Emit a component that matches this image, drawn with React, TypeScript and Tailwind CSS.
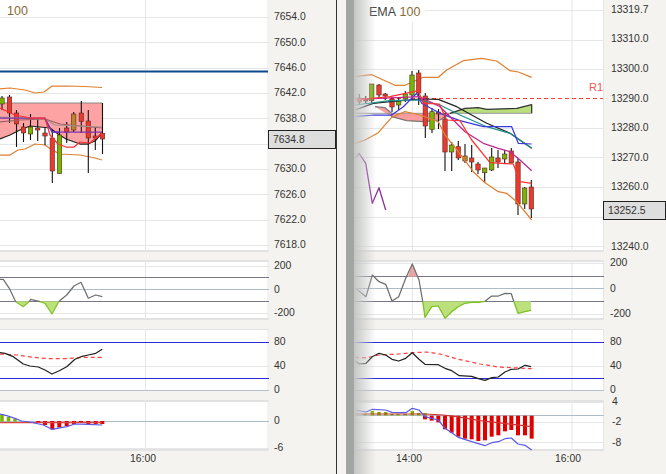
import type { ReactNode } from 'react';

// traced from 3x crops: x/3 + ox, y/3 + oy
const z = (a: number[], ox: number, oy: number) =>
  a.map((v, i) => (i % 2 === 0 ? v / 3 + ox : v / 3 + oy));
const str = (a: number[]) => a.reduce((s, v, i) => s + (i % 2 === 0 ? ' ' + v.toFixed(1) : ',' + v.toFixed(1)), '').trim();

const RED = '#e93a30';
const GREEN = '#76b500';
const OCHRE = '#b8862a';

function Line({ p, c, w = 1.25, dash }: { p: number[]; c: string; w?: number; dash?: string }) {
  return <polyline points={str(p)} fill="none" stroke={c} strokeWidth={w} strokeDasharray={dash} strokeLinejoin="round" />;
}

function Area({ p, c, s }: { p: number[]; c: string; s?: string }) {
  return <polygon points={str(p)} fill={c} stroke={s ?? 'none'} strokeWidth={s ? 1 : 0} />;
}

function HLines({ x0, w, ys, c = '#e6e6e6', sw = 1 }: { x0: number; w: number; ys: number[]; c?: string; sw?: number }) {
  return (
    <>
      {ys.map((y) => (
        <line key={y} x1={x0} x2={x0 + w} y1={y} y2={y} stroke={c} strokeWidth={sw} />
      ))}
    </>
  );
}

function VLines({ xs, y0, y1 }: { xs: number[]; y0: number; y1: number }) {
  return (
    <>
      {xs.map((x) => (
        <line key={x} x1={x} x2={x} y1={y0} y2={y1} stroke="#e6e6e6" strokeWidth={1} />
      ))}
    </>
  );
}

// x, bodyTop, bodyBottom, wickTop, wickBottom, colour
type Candle = [number, number, number, number, number, string];

function Candles({ data, w = 4.4 }: { data: Candle[]; w?: number }) {
  return (
    <>
      {data.map(([x, t, b, wt, wb, c]) => (
        <g key={x}>
          <line x1={x} x2={x} y1={wt} y2={wb} stroke="#111" strokeWidth={1.1} />
          <rect x={x - w / 2} y={t} width={w} height={b - t} fill={c} stroke="#5a2a20" strokeWidth={0.6} />
        </g>
      ))}
    </>
  );
}

function Bars({ data, y0, c, w = 4 }: { data: [number, number][]; y0: number; c: string; w?: number }) {
  return (
    <>
      {data.map(([x, y]) => (
        <rect key={x} x={x - w / 2} y={Math.min(y, y0)} width={w} height={Math.abs(y - y0)} fill={c} />
      ))}
    </>
  );
}

function Row({
  x0,
  plotW,
  top,
  h,
  axisW,
  labels,
  labelX,
  mb,
  children,
  box,
}: {
  x0: number;
  plotW: number;
  top: number;
  h: number;
  axisW: number;
  labels: [string, number][];
  labelX: number;
  mb: string;
  children: ReactNode;
  box?: { text: string; top: number; h: number; textX: number };
}) {
  return (
    <div className={`flex shrink-0 ${mb}`} style={{ height: h }}>
      <svg width={plotW} height={h} viewBox={`${x0} ${top} ${plotW} ${h}`} className="block shrink-0 bg-white">
        {children}
      </svg>
      <div className="relative" style={{ width: axisW }}>
        {labels.map(([t, y]) => (
          <span key={t} className="absolute -translate-y-1/2 leading-none whitespace-nowrap" style={{ left: labelX, top: y - top }}>
            {t}
          </span>
        ))}
        {box && (
          <div
            className="absolute -left-px right-0 flex items-center border border-[#222] bg-[#dedede]"
            style={{ top: box.top, height: box.h, paddingLeft: box.textX }}
          >
            {box.text}
          </div>
        )}
      </div>
    </div>
  );
}

/* ---------- left pane data ---------- */

const leftCandles: Candle[] = [
  [2, 98, 104, 96, 110, GREEN],
  [9.5, 97, 113, 95, 123, RED],
  [16.5, 113, 124, 110, 147, RED],
  [23.5, 127, 133, 123, 142, RED],
  [30.5, 127, 134, 114, 140, GREEN],
  [37.7, 128, 130, 118, 141, RED],
  [45, 133, 136, 128, 145, RED],
  [52.3, 138, 171, 130, 183, RED],
  [59.5, 135, 173.5, 128, 173.5, GREEN],
  [66.7, 128, 132, 122, 143, RED],
  [73.7, 114, 130, 112, 132, OCHRE],
  [81.3, 113, 121.5, 101, 133, RED],
  [88.3, 121, 138, 110, 173, RED],
  [95.3, 136, 138, 127, 150, RED],
  [102.5, 133.5, 139, 103, 154, RED],
];

const leftMacdBars: [number, number][] = [
  [38.3, 423],
  [45, 425],
  [52.3, 429.5],
  [59.3, 427.5],
  [66.7, 426],
  [74, 424],
  [81, 423],
  [88.3, 424],
  [95.7, 424],
  [102.3, 424],
];

function LeftPane() {
  const W = 269;
  const AX = 67;
  return (
    <div className="flex h-full w-[337px] shrink-0 flex-col border-r border-[#333]">
      <Row
        x0={0}
        plotW={W}
        top={0}
        h={252}
        axisW={AX}
        labelX={5}
        mb="mb-[8px]"
        labels={[
          ['7654.0', 16.5],
          ['7650.0', 42.5],
          ['7646.0', 67.5],
          ['7642.0', 92.5],
          ['7638.0', 118.5],
          ['7630.0', 168.5],
          ['7626.0', 194.5],
          ['7622.0', 219.5],
          ['7618.0', 244.5],
        ]}
        box={{ text: '7634.8', top: 130, h: 19, textX: 4 }}
      >
        <HLines x0={0} w={W} ys={[17.5, 42.5, 68.5, 93.5, 118.5, 144.5, 169.5, 194.5, 220.5, 245.5]} />
        <HLines x0={0} w={W} ys={[251]} c="#e2e2e2" sw={2} />
        <VLines xs={[145.5]} y0={0} y1={252} />
        <VLines xs={[268]} y0={0} y1={252} />
        <rect x={0} y={0} width={32} height={17} fill="#fff" />
        <text x={7} y={15} fontSize={12.5} fill="#8a6a35">100</text>
        <line x1={0} x2={268} y1={71.5} y2={71.5} stroke="#0b4a8c" strokeWidth={2} />
        <Area
          p={[0, 103, 102, 103, 102, 133, 95, 141, 88, 144, 80, 144, 66, 139, 58, 134, 50, 128, 40, 127, 30, 126, 20, 130, 10, 135, 0, 139]}
          c="#fda3a3"
        />
        <Line p={[0, 103, 102, 103]} c="#8a8a8a" w={1.2} />
        <Line p={[0, 139, 10, 135, 20, 130, 30, 126, 40, 127, 50, 128, 58, 134, 66, 139, 80, 144, 88, 144, 95, 141, 102, 133]} c="#222" />
        <Line p={[0, 89, 10, 88, 25, 90, 35, 93, 44, 92, 52, 86, 68, 86, 85, 86.5, 102, 87.5]} c="#e08030" />
        <Line p={[0, 155, 10, 155, 18, 150, 25, 149, 35, 144, 45, 145, 52, 150, 60, 154, 80, 155, 95, 158, 102, 160]} c="#e08030" />
        <Candles data={leftCandles} />
        <Line p={[0, 122, 20, 120, 45, 119, 60, 124, 102, 128]} c="#a06060" />
        <Line p={[0, 117, 45, 119, 55, 125, 102, 127]} c="#a09090" />
        <Line p={[45, 119, 52, 132, 60, 132]} c="#3030e0" />
        <Line p={[0, 118, 45, 118, 52, 132, 102, 132]} c="#8030b0" />
        <Line p={[0, 108, 15, 115, 30, 118, 45, 118, 50, 135, 58, 144, 66, 147, 74, 147, 80, 142, 90, 143, 102, 133]} c="#ff3030" />
      </Row>

      <Row
        x0={0}
        plotW={W}
        top={260}
        h={60}
        axisW={AX}
        labelX={5}
        mb="mb-[9px]"
        labels={[
          ['200', 265.5],
          ['0', 289.5],
          ['-200', 312.5],
        ]}
      >
        <HLines x0={0} w={W} ys={[261, 319]} c="#e2e2e2" sw={2} />
        <HLines x0={0} w={W} ys={[266.5, 313.5]} />
        <VLines xs={[145.5]} y0={260} y1={320} />
        <VLines xs={[268]} y0={260} y1={320} />
        <HLines x0={0} w={W} ys={[289.5]} c="#aebbc8" />
        <HLines x0={0} w={W} ys={[277.5, 301.5]} c="#77778a" />
        <Area p={z([47, 184, 70, 200, 88, 184], 0, 240)} c="#bce07c" />
        <Area p={z([120, 184, 135, 190, 156, 222, 177, 184], 0, 240)} c="#bce07c" />
        <Line p={z([47, 185, 70, 200, 88, 184], 0, 240)} c="#84c428" />
        <Line p={z([120, 185, 135, 190, 156, 222, 177, 184], 0, 240)} c="#84c428" />
        <Line p={z([0, 118, 10, 118, 28, 145, 47, 185], 0, 240)} c="#707070" />
        <Line p={z([88, 184, 92, 178, 120, 185], 0, 240)} c="#707070" />
        <Line p={z([177, 184, 200, 165, 222, 138, 243, 127, 265, 175, 287, 165, 307, 170], 0, 240)} c="#707070" />
      </Row>

      <Row
        x0={0}
        plotW={W}
        top={329}
        h={62}
        axisW={AX}
        labelX={5}
        mb="mb-[9px]"
        labels={[
          ['80', 341.5],
          ['40', 366],
          ['0', 390],
        ]}
      >
        <HLines x0={0} w={W} ys={[329.5]} c="#e2e2e2" />
        <HLines x0={0} w={W} ys={[366.5]} />
        <VLines xs={[145.5]} y0={329} y1={391} />
        <VLines xs={[268]} y0={329} y1={391} />
        <HLines x0={0} w={W} ys={[390.5]} c="#b4c0cc" />
        <HLines x0={0} w={W} ys={[342.5, 378.5]} c="#2a2ad8" />
        <Line p={z([0, 342, 50, 345, 100, 352, 150, 356, 200, 356, 250, 352, 307, 352], 0, 240)} c="#ff4040" dash="4 3" />
        <Line
          p={z([0, 338, 15, 340, 40, 350, 70, 372, 90, 378, 115, 381, 135, 390, 156, 402, 178, 392, 200, 380, 225, 358, 243, 350, 265, 345, 287, 340, 307, 328], 0, 240)}
          c="#222"
        />
      </Row>

      <Row
        x0={0}
        plotW={W}
        top={400}
        h={51}
        axisW={AX}
        labelX={5}
        mb=""
        labels={[
          ['0', 420.5],
          ['-6', 447.5],
        ]}
      >
        <HLines x0={0} w={W} ys={[401, 450]} c="#e2e2e2" sw={2} />
        <HLines x0={0} w={W} ys={[448.5]} />
        <VLines xs={[145.5]} y0={400} y1={451} />
        <VLines xs={[268]} y0={400} y1={451} />
        <HLines x0={0} w={W} ys={[421.5]} c="#aebbc8" />
        <Bars data={[[2, 414], [8.5, 417], [15, 419]]} y0={421.5} c={GREEN} w={3.5} />
        <Bars data={leftMacdBars} y0={421} c="#e00000" />
        <Line p={[0, 422.5, 102, 422.5]} c="#e04040" />
        <Line p={z([0, 522, 20, 527, 45, 535, 65, 543, 90, 546, 130, 555, 156, 568, 200, 560, 225, 552, 265, 553, 307, 555], 0, 240)} c="#5a5ae8" />
      </Row>

      <div className="relative flex-1">
        <span className="absolute left-[143px] top-[8px] -translate-x-1/2 -translate-y-1/2 leading-none">16:00</span>
      </div>
    </div>
  );
}

/* ---------- right pane data ---------- */

const rightCandles: Candle[] = [
  [359.3, 98, 102, 94, 105, RED],
  [365.7, 99.5, 101, 96, 103, RED],
  [371.7, 84, 100.7, 84, 103, GREEN],
  [379, 85, 95, 84, 98, RED],
  [385.2, 94, 96, 93, 100, RED],
  [392, 99, 107, 97, 112, RED],
  [398.7, 101, 105, 97, 110, GREEN],
  [405.3, 94, 99, 91, 102, GREEN],
  [412, 75, 95, 71, 100, GREEN],
  [418.7, 73, 93, 70, 105, RED],
  [425.3, 96, 126, 93, 138, RED],
  [432, 111.7, 129.3, 108, 133, GREEN],
  [438.5, 112, 114, 109, 129, RED],
  [445, 119, 152, 113, 171, RED],
  [451.7, 145, 152, 142, 171, GREEN],
  [458.3, 146.7, 158, 141, 160, RED],
  [465, 156, 161, 144, 163, OCHRE],
  [471.7, 158, 162, 145, 172, RED],
  [478, 164, 170, 162, 174, RED],
  [484.7, 168, 172.7, 168, 183, GREEN],
  [491.7, 157, 170, 148, 171, GREEN],
  [498, 158, 162, 150, 168, RED],
  [504.7, 154, 159, 150, 163, GREEN],
  [511.3, 151, 163, 148, 163, RED],
  [518, 162, 204, 158, 215, RED],
  [524.7, 188, 204, 187, 209, GREEN],
  [531.3, 187, 209, 180, 218, RED],
];

const rightMacdBars: [number, number][] = [
  [255, 538], [275, 542], [295, 547], [315, 568], [335, 578], [355, 590], [375, 596], [395, 598], [415, 603],
  [435, 601], [455, 590], [475, 586], [495, 574], [514, 570], [534, 586], [555, 586], [575, 596],
].map(([x, y]) => [x / 3 + 340, y / 3 + 240] as [number, number]);

function RightPane() {
  const X0 = 354;
  const W = 250;
  const AX = 62;
  const vx = [412.5, 572];
  return (
    <div className="relative flex h-full flex-1 flex-col">
      <Row
        x0={X0}
        plotW={W}
        top={0}
        h={252}
        axisW={AX}
        labelX={7}
        mb="mb-[8px]"
        labels={[
          ['13319.7', 9.5],
          ['13310.0', 38.5],
          ['13300.0', 68.5],
          ['13290.0', 98.5],
          ['13280.0', 127.5],
          ['13270.0', 157.5],
          ['13260.0', 186.5],
          ['13240.0', 246.5],
        ]}
        box={{ text: '13252.5', top: 201, h: 19, textX: 4 }}
      >
        <HLines x0={X0} w={W} ys={[10.5, 40.5, 69.5, 128.5, 157.5, 187.5, 217.5, 246.5]} />
        <HLines x0={X0} w={W} ys={[251]} c="#e2e2e2" sw={2} />
        <VLines xs={vx} y0={0} y1={252} />
        <VLines xs={[603.5]} y0={0} y1={252} />
        <rect x={X0} y={0} width={71} height={22} fill="#fff" />
        <text x={369} y={16} fontSize={12.5} fill="#444">EMA</text>
        <text x={399.5} y={16} fontSize={12.5} fill="#8a6a35">100</text>
        <Line p={[355, 98.5, 603, 98.5]} c="#ff3b3b" w={1} dash="4 3" />
        <text x={589} y={91} fontSize={11} fill="#e85a50">R1</text>
        <Area p={z([105, 320, 135, 323, 155, 340, 330, 340, 300, 360, 250, 365, 200, 362, 155, 350], 340, 0)} c="#fc9c9c" />
        <Line p={z([105, 320, 135, 323, 155, 340, 155, 350, 200, 362, 250, 365, 300, 360, 330, 340], 340, 0)} c="#777" />
        <Area p={z([330, 340, 375, 325, 415, 323, 440, 328, 530, 325, 575, 314, 575, 340], 340, 0)} c="#b9de7c" />
        <Line p={z([45, 340, 575, 340], 340, 0)} c="#999" w={1} />
        <Line p={z([330, 340, 375, 325, 415, 323, 440, 328, 530, 325, 575, 314, 575, 340], 340, 0)} c="#333" />
        <Line p={z([45, 230, 95, 224, 130, 240, 165, 256, 195, 256, 250, 232, 295, 232, 320, 210, 370, 182, 425, 175, 470, 183, 510, 212, 535, 216, 575, 232], 340, 0)} c="#e08030" />
        <Candles data={rightCandles} />
        <Line p={z([45, 430, 75, 420, 115, 398, 155, 352, 195, 335, 240, 345, 295, 365, 315, 405, 355, 455, 400, 515, 435, 548, 475, 575, 500, 580, 530, 605, 575, 660], 340, 0)} c="#e08030" />
        <Line p={z([45, 330, 100, 310, 150, 305, 240, 297, 295, 298, 350, 320, 440, 370, 510, 400, 575, 445], 340, 0)} c="#222" />
        <Line p={z([45, 315, 150, 302, 240, 300, 300, 315, 360, 345, 440, 380, 510, 400, 575, 445], 340, 0)} c="#209090" />
        <Line p={z([45, 350, 100, 345, 155, 345, 190, 320, 230, 280, 245, 310, 300, 340, 360, 362, 430, 380, 515, 380, 535, 430, 575, 432], 340, 0)} c="#3a3ae0" />
        <Line p={z([45, 298, 240, 290, 300, 320, 345, 365, 375, 395, 430, 430, 475, 445, 510, 455, 540, 480, 575, 512], 340, 0)} c="#c02890" />
        <Line p={z([45, 300, 150, 290, 235, 272, 250, 310, 298, 312, 320, 360, 360, 362, 395, 420, 450, 488, 520, 492, 540, 545, 575, 550], 340, 0)} c="#ff3030" />
        <Line p={z([45, 475, 57, 460, 77, 490, 97, 610, 117, 563, 137, 630], 340, 0)} c="#8a2a9a" />
      </Row>

      <Row
        x0={X0}
        plotW={W}
        top={260}
        h={60}
        axisW={AX}
        labelX={6}
        mb="mb-[9px]"
        labels={[
          ['200', 262.5],
          ['0', 288.5],
          ['-200', 313.5],
        ]}
      >
        <HLines x0={X0} w={W} ys={[261, 319]} c="#e2e2e2" sw={2} />
        <HLines x0={X0} w={W} ys={[263.5, 314.5]} />
        <VLines xs={vx} y0={260} y1={320} />
        <VLines xs={[603.5]} y0={260} y1={320} />
        <HLines x0={X0} w={W} ys={[288.5]} c="#aebbc8" />
        <HLines x0={X0} w={W} ys={[276.5, 301.5]} c="#77778a" />
        <Area p={z([203, 110, 217, 72, 232, 110], 340, 240)} c="#e9a5a5" />
        <Area p={z([248, 184, 255, 232, 275, 200, 295, 198, 315, 235, 335, 215, 355, 200, 375, 190, 395, 187, 415, 187, 435, 184], 340, 240)} c="#bce07c" />
        <Area p={z([521, 184, 534, 220, 555, 215, 573, 211, 573, 184], 340, 240)} c="#bce07c" />
        <Line p={z([248, 184, 255, 232, 275, 200, 295, 198, 315, 235, 335, 215, 355, 200, 375, 190, 395, 187, 415, 187, 435, 184], 340, 240)} c="#7cc020" />
        <Line p={z([521, 184, 534, 220, 555, 215, 573, 211], 340, 240)} c="#7cc020" />
        <Line p={z([45, 143, 78, 170, 97, 105, 117, 125, 137, 133, 156, 183, 176, 170, 197, 115, 217, 72, 237, 120, 248, 184], 340, 240)} c="#6e6e6e" />
        <Line p={z([435, 184, 455, 168, 475, 168, 495, 160, 514, 161, 521, 184], 340, 240)} c="#6e6e6e" />
      </Row>

      <Row
        x0={X0}
        plotW={W}
        top={329}
        h={62}
        axisW={AX}
        labelX={6}
        mb="mb-[9px]"
        labels={[
          ['80', 341.5],
          ['40', 366],
          ['0', 389.5],
        ]}
      >
        <HLines x0={X0} w={W} ys={[329.5]} c="#e2e2e2" />
        <HLines x0={X0} w={W} ys={[366.5]} />
        <VLines xs={vx} y0={329} y1={391} />
        <VLines xs={[603.5]} y0={329} y1={391} />
        <HLines x0={X0} w={W} ys={[390.5]} c="#b4c0cc" />
        <HLines x0={X0} w={W} ys={[342.5, 378.5]} c="#2a2ad8" />
        <Line p={z([45, 352, 78, 354, 117, 345, 176, 342, 217, 338, 260, 336, 300, 342, 355, 358, 420, 372, 475, 381, 534, 384, 575, 386], 340, 240)} c="#ff4040" dash="4 3" />
        <Line
          p={z([45, 362, 58, 372, 78, 370, 97, 350, 117, 340, 137, 345, 156, 358, 176, 363, 197, 355, 217, 338, 237, 358, 255, 373, 295, 374, 315, 385, 335, 392, 358, 407, 395, 409, 415, 416, 435, 421, 455, 413, 475, 411, 495, 396, 514, 388, 534, 387, 555, 376, 573, 380], 340, 240)}
          c="#222"
        />
      </Row>

      <Row
        x0={X0}
        plotW={W}
        top={400}
        h={51}
        axisW={AX}
        labelX={8}
        mb=""
        labels={[
          ['4', 401.5],
          ['-2', 421.5],
          ['-8', 442.5],
        ]}
      >
        <HLines x0={X0} w={W} ys={[401, 450]} c="#e2e2e2" sw={2} />
        <HLines x0={X0} w={W} ys={[402.5, 422.5, 442.5]} />
        <VLines xs={vx} y0={400} y1={451} />
        <VLines xs={[603.5]} y0={400} y1={451} />
        <HLines x0={X0} w={W} ys={[415.5]} c="#aebbc8" />
        <Bars data={[[372.3, 411], [379, 412], [385.7, 412], [412.3, 411], [356, 413.5], [365, 413.5], [392, 414], [398, 414], [405, 414], [418.7, 413], [425, 413]]} y0={415.5} c={GREEN} w={3.5} />
        <Bars data={rightMacdBars} y0={415.7} c="#e00000" />
        <Line p={z([45, 522, 255, 522, 310, 525, 350, 530, 420, 542, 575, 560], 340, 240)} c="#d03030" w={1.2} />
        <Line
          p={z([45, 510, 78, 516, 97, 508, 137, 510, 156, 517, 197, 518, 217, 505, 237, 510, 255, 530, 295, 540, 315, 565, 355, 592, 395, 605, 435, 617, 455, 608, 475, 605, 495, 596, 514, 594, 534, 612, 555, 616, 575, 630], 340, 240)}
          c="#5a5ae8"
        />
      </Row>

      <div className="relative flex-1">
        <span className="absolute left-[55px] top-[8px] -translate-x-1/2 -translate-y-1/2 leading-none">14:00</span>
        <span className="absolute left-[214px] top-[8px] -translate-x-1/2 -translate-y-1/2 leading-none">16:00</span>
      </div>

      <div className="pointer-events-none absolute inset-y-0 left-0 w-[22px] bg-gradient-to-r from-[#c4c6c4] to-transparent" />
    </div>
  );
}

export default function App() {
  return (
    <div className="flex h-[474px] w-[666px] overflow-hidden bg-[#f5f3ef] font-['Liberation_Sans',Arial,sans-serif] text-[10.4px] text-[#333]">
      <LeftPane />
      <div className="w-[9px] shrink-0" />
      <div className="w-[8px] shrink-0 bg-[#a2a5a2]" />
      <RightPane />
    </div>
  );
}
